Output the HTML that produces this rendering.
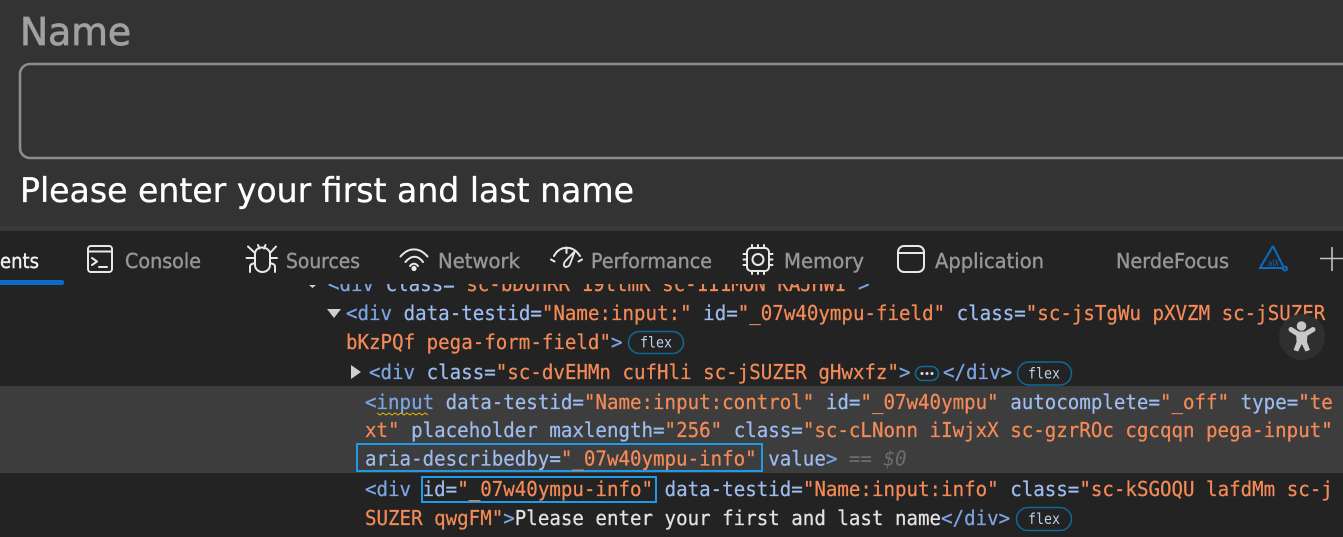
<!DOCTYPE html>
<html><head><meta charset="utf-8"><style>
html,body{margin:0;padding:0;background:#232323;width:1343px;height:537px;overflow:hidden}
svg{display:block}
.m{font-family:"DejaVu Sans Mono","Liberation Mono",monospace;font-size:20.5px;white-space:pre;stroke-width:.25px}
.tab{font-size:20.5px;fill:#979797;stroke:#979797;stroke-width:.4px;font-family:"DejaVu Sans","Liberation Sans",sans-serif}
.t{fill:#7ca5e4;stroke:#7ca5e4}.a{fill:#9dbcf0;stroke:#9dbcf0}.v{fill:#f48a57;stroke:#f48a57}.w{fill:#e3e3e3;stroke:#e3e3e3}.g{fill:#6d6d6d;font-style:italic}
.ic{fill:none;stroke:#e8e8e8;stroke-width:2;stroke-linecap:round;stroke-linejoin:round}
.b{fill:none;stroke:#0d6b9c;stroke-width:1.5}
.fx{font-family:"DejaVu Sans Mono","Liberation Mono",monospace;font-size:15px;fill:#bcd0e6}
</style></head><body>
<svg width="1343" height="537" viewBox="0 0 1343 537" xmlns="http://www.w3.org/2000/svg">
<rect width="1343" height="227" fill="#333333"/>
<rect y="226" width="1343" height="5" fill="#393939"/>
<rect y="231" width="1343" height="306" fill="#232323"/>
<text font-family="DejaVu Sans,Liberation Sans,sans-serif" x="20" y="45" font-size="38" fill="#a0a0a0" stroke="#a0a0a0" stroke-width=".8" textLength="111" lengthAdjust="spacingAndGlyphs">Name</text>
<rect x="20" y="64" width="1345" height="94" rx="10" fill="#333" stroke="#8c8c8c" stroke-width="2.600"/>
<text font-family="DejaVu Sans,Liberation Sans,sans-serif" x="20" y="202" font-size="34" fill="#fff" stroke="#fff" stroke-width=".3" textLength="614" lengthAdjust="spacingAndGlyphs">Please enter your first and last name</text>

<!-- clipped line -->
<text class="m" transform="translate(328 291) scale(.9335 1)"><tspan class="t">&lt;div </tspan><tspan class="a">class=</tspan><tspan class="v">"sc-bDoHRR 19ttmK sc-1I1MON KAJHWI"</tspan><tspan class="t">&gt;</tspan></text>
<rect y="231" width="1343" height="53" fill="#232323"/>
<path d="M309 285h7l-3.500 3z" fill="#cfcfcf"/>

<!-- tabs -->
<text class="tab" x="0" y="268" style="fill:#f2f2f2;stroke:#f2f2f2" textLength="39" lengthAdjust="spacingAndGlyphs">ents</text>
<rect x="-6" y="280" width="70" height="5" rx="2" fill="#0a6cc4"/>
<text class="tab" x="125" y="268" textLength="76" lengthAdjust="spacingAndGlyphs">Console</text>
<text class="tab" x="286" y="268" textLength="74" lengthAdjust="spacingAndGlyphs">Sources</text>
<text class="tab" x="438" y="268" textLength="82" lengthAdjust="spacingAndGlyphs">Network</text>
<text class="tab" x="591" y="268" textLength="121" lengthAdjust="spacingAndGlyphs">Performance</text>
<text class="tab" x="784" y="268" textLength="80" lengthAdjust="spacingAndGlyphs">Memory</text>
<text class="tab" x="935" y="268" textLength="109" lengthAdjust="spacingAndGlyphs">Application</text>
<text class="tab" x="1116" y="268" textLength="113" lengthAdjust="spacingAndGlyphs">NerdeFocus</text>

<!-- console -->
<g class="ic"><rect x="88" y="246" width="24" height="26" rx="3"/><path d="M88 251.500h24M92 258l5 3.500-5 3.500M99 267h8"/></g>
<!-- bug -->
<g class="ic"><path d="M258 245l1.500 3.500M265.500 245l-1.500 3.500M255 254c0-4 3-6.500 7-6.500s8 2.500 8 6.500v11c0 4-3.500 7-7.500 7s-7.500-3-7.500-7zM248 246.500l7 6.500M276 246.500l-6 6.500M246.500 258h8.500M270 258h7M255 263l-3 1c-1.500.5-2 1.500-2 3v5M270 263l3 1c1.500.5 2 1.500 2 3v5"/></g>
<!-- wifi -->
<g class="ic"><path d="M400.500 256.500c8-9.500 19-9.500 27 0M405.500 262c5.500-7 12.500-7 17.500 0M410 266c2.500-3 5.500-3 8 0"/></g>
<circle cx="414" cy="268.500" r="2.600" fill="#e8e8e8"/>
<!-- gauge -->
<g class="ic"><path d="M551 259.500l3.500 2M554 256c6-11 19-11 26 0M566.500 247.500v5.500M582 259.500l-3.500 2"/><path d="M575 251l-5 13c-1 3-5 4-6 1.500-.5-1.500 0-2.500 1-4z" stroke-width="1.800"/></g>
<!-- chip -->
<g class="ic"><rect x="747" y="248" width="22" height="23" rx="4"/><circle cx="758" cy="259.500" r="5.500"/><path d="M752 245v3M758 245v3M764 245v3M752 271v3M758 271v3M764 271v3M743.500 254h3M743.500 259.500h3M743.500 265h3M769 254h3.500M769 259.500h3.500M769 265h3.500"/></g>
<!-- application -->
<g class="ic"><rect x="898" y="246" width="26" height="26" rx="6"/><path d="M898 253h26"/></g>
<!-- axe -->
<g fill="none" stroke="#0a6cc4" stroke-width="2"><path d="M1273 246l-13 22h22M1273 246l10 20"/><circle cx="1285" cy="268.500" r="2"/></g>
<text x="1268" y="266" font-family="DejaVu Sans,Liberation Sans,sans-serif" font-size="9" fill="#0a6cc4" textLength="11" lengthAdjust="spacingAndGlyphs">aIX</text>
<path d="M1320 258.500h23M1332 247v24" stroke="#c4c4c4" stroke-width="1.600" fill="none"/>

<!-- selected row -->
<rect y="386" width="1343" height="87" fill="#3d3d3d"/>

<!-- DOM lines -->
<path d="M327 309h14l-7 9z" fill="#cfcfcf"/>
<text class="m" transform="translate(346 320) scale(.9335 1)"><tspan class="t">&lt;div </tspan><tspan class="a">data-testid=</tspan><tspan class="v">"Name:input:"</tspan><tspan class="a"> id=</tspan><tspan class="v">"_07w40ympu-field"</tspan><tspan class="a"> class=</tspan><tspan class="v">"sc-jsTgWu pXVZM sc-jSUZER</tspan></text>
<text class="m" transform="translate(346 349) scale(.9335 1)"><tspan class="v">bKzPQf pega-form-field"</tspan><tspan class="t">&gt;</tspan></text>
<rect x="628.500" y="331.500" width="55" height="22" rx="11" class="b"/>
<text class="fx" x="640" y="347.500" textLength="32" lengthAdjust="spacingAndGlyphs">flex</text>

<path d="M351 365v14l10-7z" fill="#cfcfcf"/>
<text class="m" transform="translate(369 379) scale(.9335 1)"><tspan class="t">&lt;div </tspan><tspan class="a">class=</tspan><tspan class="v">"sc-dvEHMn cufHli sc-jSUZER gHwxfz"</tspan><tspan class="t">&gt;</tspan></text>
<rect x="915.500" y="366.500" width="23" height="14" rx="7" class="b"/>
<circle cx="922" cy="373.500" r="1.500" fill="#cfe0f0"/><circle cx="927" cy="373.500" r="1.500" fill="#cfe0f0"/><circle cx="932" cy="373.500" r="1.500" fill="#cfe0f0"/>
<text class="m t" transform="translate(943 379) scale(.9335 1)">&lt;/div&gt;</text>
<rect x="1017.500" y="362" width="54" height="23" rx="11.500" class="b"/>
<text class="fx" x="1028" y="378.500" textLength="32" lengthAdjust="spacingAndGlyphs">flex</text>

<text class="m" transform="translate(365 409) scale(.9335 1)"><tspan class="t">&lt;input </tspan><tspan class="a">data-testid=</tspan><tspan class="v">"Name:input:control"</tspan><tspan class="a"> id=</tspan><tspan class="v">"_07w40ympu"</tspan><tspan class="a"> autocomplete=</tspan><tspan class="v">"_off"</tspan><tspan class="a"> type=</tspan><tspan class="v">"te</tspan></text>
<path d="M377 413l3 2 3-2 3 2 3-2 3 2 3-2 3 2 3-2 3 2 3-2 3 2 3-2 3 2 3-2 3 2 3-2 3 2" fill="none" stroke="#e6b800" stroke-width="1"/>
<text class="m" transform="translate(365 437) scale(.9335 1)"><tspan class="v">xt"</tspan><tspan class="a"> placeholder maxlength=</tspan><tspan class="v">"256"</tspan><tspan class="a"> class=</tspan><tspan class="v">"sc-cLNonn iIwjxX sc-gzrROc cgcqqn pega-input"</tspan></text>
<rect x="357" y="444" width="405" height="27" fill="none" stroke="#1e9be8" stroke-width="2"/>
<text class="m" transform="translate(365 465.500) scale(.9335 1)"><tspan class="a">aria-describedby=</tspan><tspan class="v">"_07w40ympu-info"</tspan><tspan class="a"> value</tspan><tspan class="t">&gt;</tspan><tspan class="g"> == $0</tspan></text>

<rect x="422" y="477" width="234" height="25" fill="none" stroke="#1e9be8" stroke-width="2"/>
<text class="m" transform="translate(365 496) scale(.9335 1)"><tspan class="t">&lt;div </tspan><tspan class="a">id=</tspan><tspan class="v">"_07w40ympu-info"</tspan><tspan class="a"> data-testid=</tspan><tspan class="v">"Name:input:info"</tspan><tspan class="a"> class=</tspan><tspan class="v">"sc-kSGOQU lafdMm sc-j</tspan></text>
<text class="m" transform="translate(365 525) scale(.9335 1)"><tspan class="v">SUZER qwgFM"</tspan><tspan class="t">&gt;</tspan><tspan class="w">Please enter your first and last name</tspan><tspan class="t">&lt;/div&gt;</tspan></text>
<rect x="1016.500" y="507.500" width="55" height="23" rx="11.500" class="b"/>
<text class="fx" x="1028" y="524" textLength="32" lengthAdjust="spacingAndGlyphs">flex</text>

<!-- a11y button -->
<circle cx="1302" cy="337" r="23" fill="#2f2f2f"/>
<circle cx="1301.500" cy="326" r="4.800" fill="#c8c8c8"/>
<path d="M1291 329.500l7 4.500h7.500l7.500-4.500" fill="none" stroke="#c8c8c8" stroke-width="5" stroke-linecap="round" stroke-linejoin="round"/>
<path d="M1296 333h11.500l-.5 9 3 8-4.500 1.500-3.700-7.500-3.700 7.500-4.500-1.500 3-8z" fill="#c8c8c8"/>
</svg>
</body></html>
